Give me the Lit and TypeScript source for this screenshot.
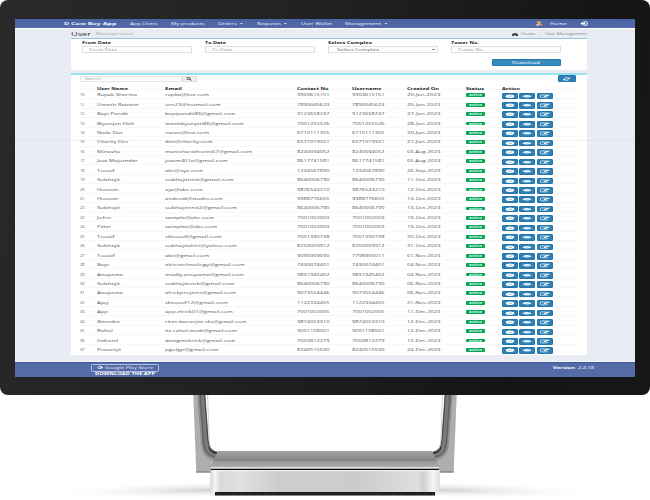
import { LitElement, html, css, svg } from "lit";
import { customElement, property } from "lit/decorators.js";

/** Single line of text, stretched to a given width and flattened vertically. */
@customElement("wide-text")
class WideText extends LitElement {
  @property({ type: Number }) w = 0;
  @property() text = "";
  static styles = css`
    :host { display: block; height: 6px; line-height: 6px; white-space: nowrap; flex: none; font-size: 7px; }
    .line { display: inline-block; transform-origin: 0 50%; vertical-align: top; }
  `;
  updated() {
    const el = this.renderRoot.querySelector(".line") as HTMLElement;
    el.style.transform = "none";
    const natural = el.getBoundingClientRect().width || 1;
    this.style.width = this.w + "px";
    el.style.transform = `scale(${this.w / natural}, 0.54)`;
  }
  render() {
    return html`<span class="line">${this.text}</span>`;
  }
}

const t = (text: string, w: number, cls = "") =>
  html`<wide-text class=${cls} .text=${text} .w=${w}></wide-text>`;

type Row = [string, number, string, number, string, string, string];
const rows: Row[] = [
  ["Rupak Sharma", 40, "rupka@live.com", 44, "9903615151", "9903615151", "20-Jan-2023"],
  ["Umesh Ratnam", 41.7, "urn23@hotmail.com", 55.7, "7890045623", "7890045623", "25-Jan-2023"],
  ["Bapi Pandit", 31, "bapipandit86@gmail.com", 70.3, "9123658237", "9123658237", "27-Jan-2023"],
  ["Biyunjan Halt", 37, "meetdiyunjan86@gmail.com", 78.7, "7001255526", "7001255526", "28-Jan-2023"],
  ["Naila Das", 25.7, "naras@live.com", 44, "6710111355", "6710111355", "20-Jun-2023"],
  ["Charity Dev", 31.3, "dev@charity.com", 47.7, "6571019321", "6571019321", "21-Jun-2023"],
  ["Minasha", 23, "manisharathores67@gmail.com", 87.3, "8240094052", "8240094052", "03-Aug-2023"],
  ["Jaat Majumder", 40.7, "jaatm401a@gmail.com", 62.7, "8617741581", "8617741581", "05-Aug-2023"],
  ["Tousif", 17.7, "abc@xyz.com", 37.7, "1234567890", "1234567890", "26-Sep-2023"],
  ["Subhajit", 23, "subhajitnnit@gmail.com", 68.7, "8640006790", "8640006790", "11-Oct-2023"],
  ["Hossain", 21.7, "xyz@abc.com", 37.7, "9876543210", "9876543210", "12-Oct-2023"],
  ["Hossain", 21.7, "android@studio.com", 57.7, "9988776655", "9988776655", "13-Oct-2023"],
  ["Subhajit", 23, "subhajitnnit2@gmail.com", 72, "8640006790", "8640006790", "13-Oct-2023"],
  ["John", 14, "sample@abc.com", 49, "7001002003", "7001002003", "19-Oct-2023"],
  ["Peter", 14, "samplea@abc.com", 52, "7001002003", "7001002003", "19-Oct-2023"],
  ["Tousif", 17.7, "sktousif@gmail.com", 56.7, "7001390738", "7001390738", "20-Oct-2023"],
  ["Subhajit", 23, "subhajitahiri@yahoo.com", 72, "8250009912", "8250009912", "31-Oct-2023"],
  ["Tousif", 17.7, "abc@gmail.com", 44, "9090909090", "7798900011", "01-Nov-2023"],
  ["Bapi", 12, "elrictechnology@gmail.com", 79.7, "7430074401", "7430074401", "04-Nov-2023"],
  ["Anupama", 26, "mudly.anupama@gmail.com", 78.7, "9831945402", "9831945402", "04-Nov-2023"],
  ["Subhajit", 23, "subhajitcnrk@gmail.com", 69.7, "8640006790", "8640006790", "06-Nov-2023"],
  ["Anupama", 26, "elrickprojects@gmail.com", 71, "9073554446", "9073554446", "06-Nov-2023"],
  ["Ajay", 11.3, "sktousif12@gmail.com", 62.7, "1122334455", "1122334455", "21-Nov-2023"],
  ["App", 11, "app.elrick01@gmail.com", 67.7, "7001002005", "7001002005", "11-Dec-2023"],
  ["Bitendra", 23, "riten.banerjee.sks@gmail.com", 81.7, "9874053310", "9874053310", "12-Dec-2023"],
  ["Rahul", 15.7, "its.rahul.modi@gmail.com", 72, "9001108501", "9001108501", "12-Dec-2023"],
  ["Indranil", 21.3, "designtekrick@gmail.com", 70.3, "7003812279", "7003812279", "12-Dec-2023"],
  ["Prasanjit", 24, "pgolgp@gmail.com", 53.7, "8240515530", "8240515530", "24-Dec-2023"],
];

const icon = (body: unknown) =>
  html`<svg class="ic" viewBox="0 0 16 6" preserveAspectRatio="none">${body}</svg>`;
const check = svg`<ellipse cx="8" cy="3" rx="4.8" ry="2.3" fill="#fff"/><path d="M5.900 3l1.500.8 2.900-1.600" fill="none" stroke="#3a8bbe" stroke-width=".6"/>`;
const eye = svg`<path d="M2.600 3Q8-.4 13.400 3 8 6.400 2.600 3z" fill="#fff" opacity=".95"/><path d="M5.500 2.600q2.500 1.700 5 0" fill="none" stroke="#6fb0d6" stroke-width=".4"/>`;
const edit = svg`<path d="M9.500 1.200H4q-1.200 0-1.200.6v2.500q0 .7 1.200.7h5.600q1.200 0 1.200-.7v-.7" fill="none" stroke="#fff" stroke-width=".8"/><path d="M6.300 4.100l.6-1.500 4.800-2.100 2 .9-4.900 2.200z" fill="#fff"/>`;

@customElement("app-root")
class AppRoot extends LitElement {
  static styles = css`
    :host { display: block; position: relative; width: 650px; height: 500px; overflow: hidden; background: #fff; font-family: "Open Sans", "Noto Sans", sans-serif; color: #444; }
    * { box-sizing: border-box; }
    .monitor { position: relative; width: 650px; height: 395px; border-radius: 8px; background: linear-gradient(105deg, #292929, #222 40%, #151515 80%, #171717); padding: 19px 15px 18px; }
    .screen { position: relative; width: 620px; height: 358px; background: #e9edf3; display: flex; flex-direction: column; overflow: hidden; }
    .screen::after { content: ""; position: absolute; left: 0; right: 0; top: 121px; height: 1px; background: #8080801a; }
    .nav { height: 9px; flex: none; background: linear-gradient(#4963a3, #536aaa); display: flex; align-items: center; padding: 0 47px 0 49px; color: #f1f3fa; }
    .nav > * + * { margin-left: 13.4px; }
    .nav .drop { display: flex; align-items: center; gap: 3px; }
    .caret { width: 3.6px; height: 1.6px; background: currentColor; clip-path: polygon(0 0, 100% 0, 50% 100%); }
    .bold { font-weight: 700; }
    .nav .push { margin-left: auto; }
    .nav .near { margin-left: 7px; }
    .ava { width: 8px; height: 5px; }
    .head { height: 10px; flex: none; border-top: 1px solid #fff; display: flex; align-items: center; padding: 0 48.5px 0 56px; color: #888; }
    .head .title { font-size: 10.5px; color: #333; margin-right: 5px; }
    .head .sub { color: #a9adb2; margin-top: 1px; }
    .crumb { margin-left: auto; display: flex; align-items: center; margin-top: 1px; }
    .home { width: 6px; height: 3px; margin-right: 3px; }
    .arrow { width: 1px; height: 1px; background: #bbb; margin: 0 4.5px 0 4.5px; }
    .card { margin: 0 48.5px 0 56px; background: #fff; flex: none; }
    .filters { height: 32px; border-top: 1px solid #92c8de; padding: 1.2px 0 0 11.3px; }
    .grid { display: grid; grid-template-columns: repeat(4, 110px); column-gap: 13px; color: #222; }
    .inp { height: 7px; border: 1px solid #dcdfe4; display: flex; align-items: center; padding-left: 5.5px; color: #999; background: #fff; }
    .select { padding-left: 7.5px; color: #666; justify-content: space-between; padding-right: 2px; }
    .select .caret { background: #666; }
    .btn { background: #3080b5; color: #fff; display: flex; align-items: center; justify-content: center; border: .5px solid #2377ab; border-radius: 1px; }
    .dl { width: 69px; height: 7px; margin: 6.3px 0 0 409.7px; background: #3a8bbe; }
    .users { margin-top: 3px; height: 282.3px; border-top: 2px solid #94e2f3; padding: .4px 5px 0 5px; }
    .bar { display: flex; height: 7px; align-items: center; padding: 0 6px 0 3.5px; }
    .search { width: 102px; height: 6px; padding-left: 4.5px; border-color: #e4e6e9; }
    .find { width: 15px; height: 6px; background: #f1f1f1; border: .5px solid #ddd; display: grid; place-items: center; }
    .reload { width: 18px; height: 7px; margin-left: auto; }
    .ic { width: 100%; height: 100%; display: block; }
    .row { display: grid; grid-template-columns: 17.5px 68px 132px 55px 55px 58.5px 36.5px 1fr; align-items: center; padding-left: 3.5px; height: 9.44px; border-top: .2px solid transparent; box-shadow: 0 -1px #f8f8f9; color: #555; }
    .row.th { height: 4px; margin-top: 3.6px; border: 0; box-shadow: none; color: #222; font-weight: 700; }
    .badge { width: 19px; height: 3.8px; background: #06a257; border-radius: 1px; display: grid; place-items: center; color: #d8f7e7; font-weight: 700; font-size: 5.4px; }
    .badge wide-text { height: 4px; line-height: 4px; }
    .acts { display: flex; gap: 1.3px; margin-top: 1.4px; }
    .acts .btn { width: 16px; height: 6.6px; }
    .num { font-size: 6px; }
    .foot { margin-top: auto; height: 15px; flex: none; border-top: 1px solid #3f5b9b; box-shadow: 0 -1px #f7f8fb; background: #536ba6; color: #fff; display: flex; justify-content: space-between; padding: 1px 41px 0 76px; }
    .store { width: 68px; height: 7.6px; border: 1px solid #b4c1e2; border-radius: 1.5px; display: flex; align-items: center; padding-left: 5px; gap: 2px; color: #e9edf8; }
    .g { width: 6px; height: 3px; }
    .dlapp { margin: -.7px 0 0 4px; }
    .ver { display: flex; gap: 3px; margin-top: .6px; }
    .stand { position: absolute; left: 0; top: 395px; width: 650px; height: 105px; }
  `;

  render() {
    const drop = (s: string, w: number) => html`<div class="drop">${t(s, w)}<i class="caret"></i></div>`;
    const caption = (s: string, w: number) => t(s, w, "bold");
    return html`
      <div class="monitor">
        <div class="screen">
          <div class="nav">
            ${t("D Cow Boy App", 52.5, "bold")}${t("App Users", 27.5)}${t("My products", 33.5)}
            ${drop("Orders", 19)}${drop("Requests", 24)}${t("User Wallet", 31)}${drop("Management", 36)}
            <svg class="ava push" viewBox="0 0 8 5"><ellipse cx="4" cy="1.6" rx="2.200" ry="1.4" fill="#eea34d"/><path d="M.3 4.500Q1.500 2.700 4 2.700t3.700 1.800z" fill="#f2d7bb"/><path d="M4.500 3.200l3 1.300H4z" fill="#9c4b36"/></svg>
            ${t("Home", 16.5, "near")}
            <svg class="ava" viewBox="0 0 8 5"><path d="M3.500 .8h2.800q1 0 1 .7v2q0 .7-1 .7H3.500" fill="none" stroke="#fff" stroke-width=".9"/><path d="M.2 2.500l2.900-1.700v1h2.300v1.400H3.100v1z" fill="#fff"/></svg>
          </div>
          <div class="head">
            ${t("User", 20, "title")}${t("Management", 36.5, "sub")}
            <div class="crumb">
              <svg class="home" viewBox="0 0 5 3" preserveAspectRatio="none"><path d="M0 3V1.500Q.3 0 2.500 0T5 1.500V3H3V2H2v1z" fill="#444"/></svg>
              ${t("Home", 14)}<i class="arrow"></i>${t("User Management", 42)}
            </div>
          </div>
          <div class="card filters">
            <div class="grid">
              ${caption("From Date", 29)}${caption("To Date", 21)}${caption("Select Complex", 44)}${caption("Tower No.", 28)}
              <div class="inp">${t("From Date", 28)}</div>
              <div class="inp">${t("To Date", 20)}</div>
              <div class="inp select">${t("Select Complex", 42)}<i class="caret"></i></div>
              <div class="inp">${t("Tower No.", 26)}</div>
            </div>
            <div class="btn dl">${t("Download", 28)}</div>
          </div>
          <div class="card users">
            <div class="bar">
              <div class="inp search">${t("Search", 16)}</div>
              <div class="find"><svg width="6" height="4" viewBox="0 0 6 4"><ellipse cx="2.5" cy="1.5" rx="1.7" ry="1" fill="none" stroke="#333" stroke-width=".8"/><path d="M3.600 2.200l1.900 1.200" stroke="#333" stroke-width=".9"/></svg></div>
              <div class="btn reload"><svg width="7" height="4" viewBox="0 0 7 4"><path d="M5.700 1.300Q3.500-.1 1.600 1.200M1.200 2.600q2.200 1.500 4.200.2" fill="none" stroke="#fff" stroke-width=".8"/><path d="M6.700.2v1.700H4zM.3 3.800V2.100H3z" fill="#fff"/></svg></div>
            </div>
            <div class="row th">
              <span></span>${t("User Name", 31)}${t("Email", 17)}${t("Contact No", 31.5)}${t("Username", 29.5)}${t("Created On", 32)}${t("Status", 18)}${t("Action", 18)}
            </div>
            ${rows.map(
              (r, i) => html`<div class="row">
                ${t(String(i + 10), 4.5, "num")}${t(r[0], r[1])}${t(r[2], r[3])}${t(r[4], 32.5)}${t(r[5], 32.5)}${t(r[6], 33.5)}
                <div class="badge">${t("active", 13)}</div>
                <div class="acts"><span class="btn">${icon(check)}</span><span class="btn">${icon(eye)}</span><span class="btn">${icon(edit)}</span></div>
              </div>`
            )}
          </div>
          <div class="foot">
            <div>
              <div class="store"><svg class="g" viewBox="0 0 6 3"><ellipse cx="3" cy="1.5" rx="2.3" ry="1.1" fill="none" stroke="#fff" stroke-width=".7"/><path d="M3 1.500h2.500" stroke="#fff" stroke-width=".8"/></svg>${t("Google Play Store", 48)}</div>
              <div class="dlapp">${t("DOWNLOAD THE APP", 60, "bold")}</div>
            </div>
            <div class="ver">${t("Version", 22, "bold")}${t("2.4.18", 16)}</div>
          </div>
        </div>
      </div>
      <svg class="stand" viewBox="0 395 650 105">
        <defs>
          <linearGradient id="base"><stop offset="0" stop-color="#d5d5d5"/><stop offset=".02" stop-color="#f6f6f6"/><stop offset=".045" stop-color="#d9d9d9"/><stop offset=".13" stop-color="#e0e0e0"/><stop offset=".3" stop-color="#cdcdcd"/><stop offset=".65" stop-color="#ccc"/><stop offset=".9" stop-color="#dedede"/><stop offset=".93" stop-color="#d0d0d0"/><stop offset=".97" stop-color="#f5f5f5"/><stop offset="1" stop-color="#ddd"/></linearGradient>
          <linearGradient id="bar" x2="0" y2="1"><stop offset="0" stop-color="#a2a2a2"/><stop offset=".45" stop-color="#8d8d8d"/><stop offset=".6" stop-color="#858585"/><stop offset=".65" stop-color="#989898"/><stop offset="1" stop-color="#ababab"/></linearGradient>
          <radialGradient id="sh"><stop offset="0" stop-color="#888" stop-opacity=".65"/><stop offset=".5" stop-color="#aaa" stop-opacity=".25"/><stop offset="1" stop-color="#ccc" stop-opacity="0"/></radialGradient>
          <g id="arm">
            <path d="M193.300 395h12l4 50q1.500 7 8.500 8l-6 14v5.500H196.300z" fill="#aeaeae"/>
            <path d="M196.300 471h14.500v1.700h-14.500z" fill="#919191"/>
            <path d="M198.300 395h6.700l3.200 46q1 10 9.500 11l-3 7q-11-2-12.200-13z" fill="#7a7a7a"/>
            <path d="M197.800 395l3.900 50q1.300 13 12.300 15.500" fill="none" stroke="#8a8a8a" stroke-width="1"/>
            <path d="M200.300 395l3.300 48q1.500 12 11.400 14" fill="none" stroke="#5c5c5c" stroke-width="1"/>
            <path d="M204.700 395l3.100 44q1 12 9.700 13.500" fill="none" stroke="#484848" stroke-width="1.100"/>
            <path d="M209 447q2 6 8.500 6.500" fill="none" stroke="#2c2c2c" stroke-width="1.500"/>
            <path d="M207.600 395l1.500 44q.5 10 3.500 11.500" fill="none" stroke="#c6c6c6" stroke-width=".8"/>
          </g>
        </defs>
        <ellipse cx="210" cy="490" rx="150" ry="8" fill="url(#sh)" opacity=".6" transform="rotate(-1 210 490)"/>
        <ellipse cx="440" cy="490" rx="150" ry="8" fill="url(#sh)" opacity=".6" transform="rotate(1 440 490)"/>
        <use href="#arm"/><use href="#arm" transform="matrix(-1 0 0 1 650 0)"/>
        <path d="M218 451h214l7 16H210.500z" fill="url(#bar)"/>
        <path d="M211 467h228v2H211z" fill="#e2e2e2"/>
        <path d="M211 468.700h228v1.500H211z" fill="#0c0c0c"/>
        <path d="M210.300 470.200h229.700v20.300q0 2-4 2h-221.700q-4 0-4-2z" fill="url(#base)"/>
        <path d="M212 470.700h227" stroke="#f6f6f6"/>
        <path d="M215 492h220v3.600H215z" fill="#161616"/>
        <path d="M216 493.800h218" stroke="#3d3d3d" stroke-width="2" stroke-dasharray=".8 1.200"/>
      </svg>
    `;
  }
}
